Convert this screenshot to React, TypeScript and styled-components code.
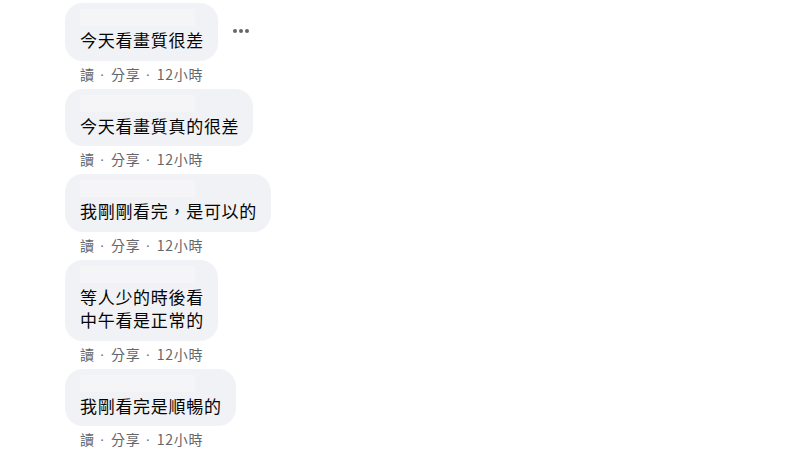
import React from 'react';
import styled, { createGlobalStyle } from 'styled-components';

type CommentT = {
  lines: string[];
  more?: boolean;
};

const comments: CommentT[] = [
  { lines: ['今天看畫質很差'], more: true },
  { lines: ['今天看畫質真的很差'] },
  { lines: ['我剛剛看完，是可以的'] },
  { lines: ['等人少的時後看', '中午看是正常的'] },
  { lines: ['我剛看完是順暢的'] },
];

const App: React.FC = () => (
  <>
    <GlobalStyle />
    <Page>
      {comments.map((c, i) => (
        <Comment key={i}>
          <BubbleRow>
            <Bubble>
              <HiddenName />
              {c.lines.map((l) => (
                <Line key={l}>{l}</Line>
              ))}
            </Bubble>
            {c.more && (
              <More aria-label="more">
                <Dot />
                <Dot />
                <Dot />
              </More>
            )}
          </BubbleRow>
          <Meta>
            <span>讀</span>
            <Sep>·</Sep>
            <span>分享</span>
            <Sep>·</Sep>
            <span>12小時</span>
          </Meta>
        </Comment>
      ))}
    </Page>
  </>
);

const GlobalStyle = createGlobalStyle`
  html, body {
    margin: 0;
    padding: 0;
    background: #ffffff;
  }
  body {
    font-family: "Noto Sans CJK TC", "Noto Sans", sans-serif;
    color: #050505;
  }
`;

const Page = styled.div`
  width: 800px;
  height: 454px;
  overflow: hidden;
  padding: 3px 0 0 65px;
  box-sizing: border-box;
  display: flex;
  flex-direction: column;
`;

const Comment = styled.div`
  display: flex;
  flex-direction: column;
  align-items: flex-start;
  margin-bottom: 6px;
`;

const BubbleRow = styled.div`
  display: flex;
  align-items: center;
  gap: 15px;
`;

const Bubble = styled.div`
  background: #f0f2f5;
  border-radius: 18px;
  padding: 6px 14px 9px 15px;
  display: flex;
  flex-direction: column;
`;

const HiddenName = styled.div`
  width: 115px;
  height: 17px;
  margin-bottom: 2px;
  background: #f5f5f7;
`;

const Line = styled.div`
  font-size: 17px;
  line-height: 23.5px;
  letter-spacing: 0.7px;
  white-space: nowrap;
`;

const More = styled.div`
  display: flex;
  gap: 2px;
  margin-top: -2px;
`;

const Dot = styled.span`
  width: 4px;
  height: 4px;
  border-radius: 50%;
  background: #65676b;
`;

const Meta = styled.div`
  margin-top: 4px;
  padding-left: 15px;
  height: 18px;
  display: flex;
  align-items: center;
  font-size: 14px;
  letter-spacing: 0.7px;
  color: #65676b;
  white-space: nowrap;
`;

const Sep = styled.span`
  font-family: "Liberation Sans", sans-serif;
  padding: 0 6px 0 5px;
`;

export default App;
